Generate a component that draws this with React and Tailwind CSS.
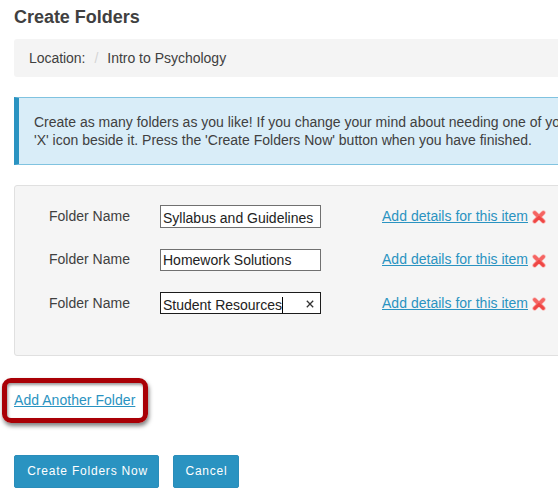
const folders = [
  { name: 'Syllabus and Guidelines', row: 'h-[44px]', box: 'h-[23px] border-[#707070] pt-[3px]', icon: 'mt-[5px]', label: 'pt-[2px]' },
  { name: 'Homework Solutions', row: 'h-[43px]', box: 'h-[22px] border-[#707070] pt-px', icon: 'mt-[5px]', label: 'pt-px' },
  { name: 'Student Resources', row: 'h-[44px]', box: 'h-[22px] border-[#1c1c1c] pt-[3px]', icon: 'mt-[5px]', label: 'pt-[2px]', focused: true },
];

function DeleteIcon({ className }) {
  return (
    <svg className={className} width="14" height="14" viewBox="0 0 14 14" fill="none">
      <path d="M2.6 2.6 11.4 11.4M11.4 2.6 2.6 11.4" stroke="#f9b5b3" strokeWidth="4.6" strokeLinecap="round" />
      <path d="M2.7 2.7 11.3 11.3M11.3 2.7 2.7 11.3" stroke="#f56462" strokeWidth="3.4" strokeLinecap="round" />
      <path d="M7 7.3 11.2 11.4M7 7.3 2.8 11.4" stroke="#ee4644" strokeWidth="2.4" strokeLinecap="round" />
    </svg>
  );
}

function FolderRow({ folder }) {
  return (
    <div className={`flex items-start ${folder.row}`}>
      <span className={`w-[111px] ${folder.label}`}>Folder Name</span>
      <div className={`flex w-[161px] items-start border bg-white pl-[2px] text-[#222] ${folder.box}`}>
        <span className="leading-[18px]">{folder.name}</span>
        {folder.focused && (
          <>
            <span className="mt-px h-4 w-px bg-black" />
            <svg className="ml-auto mt-[4px] mr-[6px]" width="8" height="8" viewBox="0 0 8 8">
              <path d="M.8.8 7.2 7.2M7.2.8.8 7.2" stroke="#333" strokeWidth="1.3" />
            </svg>
          </>
        )}
      </div>
      <a className={`ml-[61px] w-[146px] tracking-[0.02px] text-[#2a93c1] underline underline-offset-1 ${folder.label}`}>Add details for this item</a>
      <DeleteIcon className={`ml-[4px] shrink-0 ${folder.icon}`} />
    </div>
  );
}

export default function App() {
  return (
    <div className="h-[496px] w-[558px] overflow-hidden bg-white pl-[14px] font-['Liberation_Sans',Arial,sans-serif] text-[14px] leading-[18px] whitespace-nowrap text-[#404040]">
      <h1 className="h-[39px] pt-[5px] text-[18px] leading-6 font-bold tracking-[-0.03px]">Create Folders</h1>
      <nav className="flex h-[38px] items-center rounded-l-[3px] bg-[#f4f4f4] pl-[15px]">
        <span className="tracking-[-0.05px]">Location:</span>
        <span className="mx-[9px] text-[#d4d4d4]">/</span>
        <span className="tracking-[-0.01px]">Intro to Psychology</span>
      </nav>
      <div className="mt-5 h-[68px] w-[600px] border-y border-l-[5px] border-y-[#80c3e0] border-l-[#2a93c1] bg-[#d9edf8] pt-[15px] pl-[15px]">
        <p>Create as many folders as you like! If you change your mind about needing one of yo</p>
        <p>'X' icon beside it. Press the 'Create Folders Now' button when you have finished.</p>
      </div>
      <section className="mt-5 h-[171px] w-[600px] rounded-[3px] border border-[#e0e0e0] bg-[#f5f5f5] pt-[19px] pl-[34px]">
        {folders.map((folder) => (
          <FolderRow key={folder.name} folder={folder} />
        ))}
      </section>
      <div className="mt-[22px] -ml-3 h-[45px] w-[146px] rounded-[9px] border-[5px] border-[#a90006] pt-[8px] pl-[7px] shadow-[1px_3px_4px_rgba(0,0,0,0.5),inset_1px_2px_3px_rgba(0,0,0,0.4)]">
        <a className="tracking-[0.04px] text-[#2a93c1] underline underline-offset-1">Add Another Folder</a>
      </div>
      <div className="mt-8 flex gap-[14px] text-[12px] tracking-[0.78px] text-white">
        <button className="h-[33px] w-[145px] rounded-[2px] border border-[#2a8dba] bg-[#2a93c1] pb-[2px] pl-[2px]">Create Folders Now</button>
        <button className="h-[33px] w-[66px] rounded-[2px] border border-[#2a8dba] bg-[#2a93c1] pb-[2px] pl-px">Cancel</button>
      </div>
    </div>
  );
}
